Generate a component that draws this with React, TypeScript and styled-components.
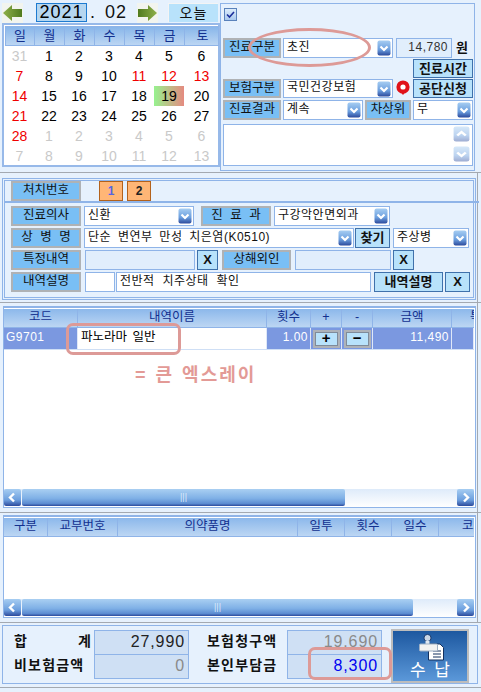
import * as React from 'react'
import styled, { createGlobalStyle } from 'styled-components'

const GlobalStyle = createGlobalStyle`
  html, body {
    margin: 0;
    padding: 0;
    background: #e6f1fd;
  }
  * {
    box-sizing: border-box;
  }
`

const Page = styled.div`
  position: relative;
  width: 481px;
  height: 692px;
  overflow: hidden;
  background: #e6f1fd;
  color: #111;
  font-family: 'Liberation Sans', 'Noto Sans CJK KR', sans-serif;
  font-size: 12px;
  word-spacing: 2px;
`

const Section = styled.section<{ $h: number; $pt?: number; $rule?: boolean }>`
  height: ${p => p.$h}px;
  padding: ${p => p.$pt || 0}px 4px 0 2px;
  border-bottom: 1px solid #a3a9b1;
  background: ${p => (p.$rule ? 'linear-gradient(#a3a9b1, #a3a9b1) 477px 0 / 1px 100% no-repeat' : 'none')};
`

const TopLayout = styled.div`
  display: flex;
  height: 100%;
`

const CalendarColumn = styled.div`
  width: 218px;
  display: flex;
  flex-direction: column;
`

const MonthBar = styled.div`
  height: 23px;
  padding-top: 3px;
  display: flex;
  align-items: flex-start;
`

const ArrowIcon = styled.svg<{ $ml: number }>`
  width: 21px;
  height: 20px;
  margin-left: ${p => p.$ml}px;
  background: #f2f4ee;
  flex: none;
`

const YearBox = styled.div`
  width: 51px;
  height: 19px;
  margin-left: 13px;
  background: #b5d6f0;
  border: 1px solid #1e7bd0;
  font-size: 18px;
  line-height: 17px;
  letter-spacing: 1px;
  text-align: center;
  color: #000;
`

const MonthText = styled.div`
  width: 36px;
  margin-left: 3px;
  font-size: 18px;
  line-height: 19px;
  letter-spacing: 1px;
  word-spacing: 3px;
  white-space: nowrap;
`

const TodayButton = styled.div`
  width: 50px;
  height: 19px;
  margin-left: 10px;
  background: #b8e2fb;
  border-top: 1px solid #f4f4f4;
  border-left: 1px solid #f4f4f4;
  font-size: 14px;
  line-height: 18px;
  text-align: center;
  letter-spacing: 1px;
`

const Calendar = styled.div`
  width: 218px;
  height: 144px;
  background: #fff;
  border: 2px solid #97b9e9;
  padding: 1px 0 0 1px;
`

const WeekHeader = styled.div`
  width: 214px;
  display: grid;
  grid-template-columns: 29px 30px 30px 30px 30px 30px 35px;
  height: 20px;
  border: 1px solid #8fb4e8;
  background: linear-gradient(#88b6ea, #bcd6f3);
`

const WeekDay = styled.div`
  border-right: 1px solid #8fb4e8;
  color: #12308f;
  font-size: 13px;
  line-height: 17px;
  text-align: center;
  &:last-child {
    border-right: 0;
  }
`

const DayGrid = styled.div`
  width: 214px;
  display: grid;
  grid-template-columns: 29px 30px 30px 30px 30px 30px 35px;
  grid-auto-rows: 20px;
`

const Day = styled.div<{ $color: string; $today?: boolean }>`
  color: ${p => p.$color};
  font-size: 14px;
  line-height: 20px;
  text-align: center;
  background: ${p => (p.$today ? 'linear-gradient(90deg, #97f28f, #e58a80)' : 'none')};
`

const FormPanel = styled.div`
  width: 255px;
  height: 168px;
  margin: 3px 0 0 0;
  padding: 3px 1px 0 2px;
  border: 1px solid #8fb4e8;
  display: flex;
  flex-direction: column;
`

const CheckRow = styled.div`
  height: 31px;
  padding: 1px 0 0 1px;
`

const CheckBox = styled.div`
  width: 13px;
  height: 13px;
  background: linear-gradient(#dcecfb, #a9c9ee);
  border: 1px solid #5a82bb;
  display: flex;
  align-items: center;
  justify-content: center;
`

const Row = styled.div<{ $h: number; $mt?: number; $end?: boolean }>`
  display: flex;
  height: ${p => p.$h}px;
  margin-top: ${p => p.$mt || 0}px;
  justify-content: ${p => (p.$end ? 'flex-end' : 'flex-start')};
`

const Label = styled.div<{ $w: number; $ml?: number; $spaced?: boolean }>`
  flex: none;
  width: ${p => p.$w}px;
  margin-left: ${p => p.$ml || 0}px;
  background: #79bff5;
  border: 2px solid #afb2b5;
  line-height: 15px;
  font-size: 12.5px;
  text-align: center;
  word-spacing: ${p => (p.$spaced ? 4 : 2)}px;
  white-space: nowrap;
  overflow: hidden;
`

const SelectBox = styled.div<{ $w: number; $ml?: number }>`
  flex: none;
  width: ${p => p.$w}px;
  margin-left: ${p => p.$ml || 0}px;
  background: #fff;
  border: 1px solid #8fb4e8;
  padding-left: 3px;
  padding-right: 1px;
  display: flex;
  align-items: center;
  justify-content: space-between;
  line-height: 15px;
  white-space: nowrap;
`

const SelectText = styled.span`
  position: relative;
  top: -1px;
  letter-spacing: 0.5px;
  word-spacing: 3px;
`

const ChevronIcon = styled.svg<{ $faded?: boolean }>`
  width: 14px;
  height: 16px;
  flex: none;
  opacity: ${p => (p.$faded ? 0.45 : 1)};
`

const ReadBox = styled.div<{ $w: number; $ml?: number; $fill?: string }>`
  flex: none;
  width: ${p => p.$w}px;
  margin-left: ${p => p.$ml || 0}px;
  background: ${p => p.$fill || '#e1eefc'};
  border: 1px solid #8fb4e8;
  padding: 0 3px;
  line-height: 17px;
  letter-spacing: 0.5px;
  word-spacing: 4px;
  white-space: nowrap;
`

const AmountBox = styled(ReadBox)`
  text-align: right;
  color: #333;
  letter-spacing: 0.5px;
`

const Won = styled.div`
  width: 20px;
  margin-left: 4px;
  font-size: 13px;
  font-weight: 700;
  line-height: 20px;
`

const ActionButton = styled.div<{ $w: number; $ml?: number }>`
  flex: none;
  width: ${p => p.$w}px;
  margin-left: ${p => p.$ml || 0}px;
  background: #b8e2fb;
  border: 1px solid #3f71ab;
  font-size: 13px;
  font-weight: 700;
  line-height: 17px;
  text-align: center;
  white-space: nowrap;
`

const AlertDot = styled.svg`
  width: 16px;
  height: 18px;
  margin-left: 2px;
  flex: none;
`

const MemoBox = styled.div`
  height: 42px;
  width: 250px;
  margin-top: 4px;
  background: #fff;
  border: 1px solid #8fb4e8;
  padding: 1px 2px 0 0;
  display: flex;
  flex-direction: column;
  align-items: flex-end;
  gap: 4px;
`

const MemoScroll = styled(ChevronIcon)`
  width: 17px;
  height: 16px;
`

const DoublePanel = styled.div<{ $h: number }>`
  width: 474px;
  height: ${p => p.$h}px;
  border: 3px double #8fb4e8;
  padding: 0 0 0 6px;
`

const TreatRow = styled.div`
  height: 22px;
  margin: 0 -6px 0 -6px;
  padding: 0 0 0 6px;
  display: flex;
  border-bottom: 2px solid #8fb4e8;
`

const NumberButton = styled.div<{ $ml: number; $active?: boolean }>`
  width: 24px;
  height: 20px;
  margin-left: ${p => p.$ml}px;
  background: #ffb676;
  border: 1px solid #b3621c;
  color: ${p => (p.$active ? '#5566e0' : '#222')};
  font-weight: 700;
  line-height: 18px;
  text-align: center;
`

const FormRows = styled.div`
  padding-top: 3px;
  display: flex;
  flex-direction: column;
  gap: 2px;
`

const GridPanel = styled.div<{ $h: number }>`
  width: 473px;
  height: ${p => p.$h}px;
  margin-left: 1px;
  border: 1px solid #8fb4e8;
  border-top-width: 2px;
  padding: 1px 1px 0 0;
  background: #fff;
  display: flex;
  flex-direction: column;
`

const TableHeader = styled.div`
  display: flex;
  height: 19px;
  overflow: hidden;
  flex: none;
  background: linear-gradient(#8cb8eb, #bcd6f3);
  border-bottom: 1px solid #8fb4e8;
`

const HeaderCell = styled.div<{ $w: number }>`
  flex: none;
  width: ${p => p.$w}px;
  border-right: 1px solid #8fb4e8;
  color: #12308f;
  font-size: 12.5px;
  line-height: 17px;
  text-align: center;
  white-space: nowrap;
`

const TableRow = styled.div`
  display: flex;
  height: 22px;
  flex: none;
  border-bottom: 1px solid #cfdff5;
`

const Cell = styled.div<{ $w: number; $light?: boolean; $right?: boolean }>`
  flex: none;
  width: ${p => p.$w}px;
  padding: 0 2px;
  background: ${p => (p.$light ? '#fff' : '#7b98e0')};
  color: ${p => (p.$light ? '#000' : '#fff')};
  border-right: 1px solid #dfe8f8;
  text-align: ${p => (p.$right ? 'right' : 'left')};
  line-height: 18px;
  letter-spacing: ${p => (p.$light ? 0 : 0.5)}px;
`

const NameCell = styled(Cell)`
  padding-left: 3px;
  font-size: 12.5px;
`

const StepCell = styled(Cell)`
  padding: 2px;
`

const StepButton = styled.div`
  width: 27px;
  height: 18px;
  background: #b8e2fb;
  border: 2px solid #aeb2b8;
  outline: 1px solid #7f8b9a;
  outline-offset: -3px;
  font-size: 15px;
  font-weight: 900;
  line-height: 12px;
  text-align: center;
  color: #000;
`

const TableBody = styled.div`
  flex: 1;
`

const ScrollBar = styled.div`
  height: 18px;
  flex: none;
  display: flex;
  background: linear-gradient(#deebfa, #fff);
  justify-content: space-between;
  padding-right: 0;
`

const ScrollButton = styled.svg`
  width: 17px;
  height: 17px;
  flex: none;
`

const ScrollThumb = styled.div<{ $w: number }>`
  width: ${p => p.$w}px;
  height: 17px;
  margin-left: 1px;
  margin-right: auto;
  border-radius: 2px;
  background: linear-gradient(#a9cff2 0%, #7fb0e6 55%, #5d8dd2 85%, #2c4a9c 100%);
  color: #dbe9fa;
  font-size: 9px;
  line-height: 16px;
  text-align: center;
  letter-spacing: 0;
`

const SummaryPanel = styled.div`
  width: 476px;
  height: 59px;
  border: 1px solid #8fb4e8;
  border-top-width: 1px;
  padding: 4px 0 0 11px;
  display: flex;
`

const SummaryGrid = styled.div<{ $ml?: number }>`
  margin-left: ${p => p.$ml || 0}px;
  display: grid;
  grid-template-columns: 80px 95px;
  grid-auto-rows: 24px;
  height: 47px;
`

const SummaryLabel = styled.div`
  display: flex;
  justify-content: space-between;
  padding-right: 2px;
  font-size: 14px;
  font-weight: 700;
  line-height: 22px;
  letter-spacing: 1.2px;
  white-space: nowrap;
`

const SummaryValue = styled.div<{ $color: string }>`
  background: #cfe0f4;
  border: 1px solid #8fb4e8;
  margin-bottom: -1px;
  padding-right: 3px;
  color: ${p => p.$color};
  font-size: 16px;
  line-height: 21px;
  text-align: right;
  letter-spacing: 0.9px;
`

const PayButton = styled.div`
  width: 78px;
  height: 54px;
  margin: -1px 0 0 9px;
  background: linear-gradient(#1d58a0, #5b98d9);
  border: 2px solid #bdbdbd;
  display: flex;
  flex-direction: column;
  align-items: center;
  color: #fff;
  font-size: 17px;
  word-spacing: 4px;
  line-height: 20px;
`

const StampIcon = styled.svg`
  width: 28px;
  height: 29px;
  margin-top: 1px;
  flex: none;
`

const Ellipse = styled.div`
  position: absolute;
  left: 248px;
  top: 28px;
  width: 123px;
  height: 39px;
  border: 3px solid #dd9a97;
  border-radius: 50%;
`

const MarkBox = styled.div<{ $x: number; $y: number; $w: number; $h: number }>`
  position: absolute;
  left: ${p => p.$x}px;
  top: ${p => p.$y}px;
  width: ${p => p.$w}px;
  height: ${p => p.$h}px;
  border: 3px solid #dd9a97;
  border-radius: 7px;
`

const MarkNote = styled.div`
  position: absolute;
  left: 135px;
  top: 363px;
  color: #e39a96;
  font-size: 18px;
  font-weight: 700;
  line-height: 24px;
  letter-spacing: 2px;
  word-spacing: 1px;
  white-space: nowrap;
`

const LeftArrow = ({ ml }: { ml: number }) => (
  <ArrowIcon $ml={ml} viewBox="0 0 21 20">
    <defs>
      <linearGradient id="arrowL" x1="0" y1="0" x2="1" y2="0">
        <stop offset="0" stopColor="#8fb04a" />
        <stop offset="1" stopColor="#4f7a1e" />
      </linearGradient>
    </defs>
    <path d="M1 10 L10 2 L10 6 L20 6 L20 14 L10 14 L10 18 Z" fill="url(#arrowL)" />
  </ArrowIcon>
)

const RightArrow = ({ ml }: { ml: number }) => (
  <ArrowIcon $ml={ml} viewBox="0 0 21 20">
    <defs>
      <linearGradient id="arrowR" x1="0" y1="0" x2="1" y2="0">
        <stop offset="0" stopColor="#4f7a1e" />
        <stop offset="1" stopColor="#8fb04a" />
      </linearGradient>
    </defs>
    <path d="M20 10 L11 2 L11 6 L1 6 L1 14 L11 14 L11 18 Z" fill="url(#arrowR)" />
  </ArrowIcon>
)

let chevronId = 0

const Chevron = ({ up, faded }: { up?: boolean; faded?: boolean }) => {
  const id = `chev${chevronId++}`
  const Wrap = faded ? MemoScroll : ChevronIcon
  return (
    <Wrap $faded={faded} viewBox="0 0 14 16" preserveAspectRatio="none">
      <defs>
        <linearGradient id={id} x1="0" y1="0" x2="0" y2="1">
          <stop offset="0" stopColor="#a6cdf2" />
          <stop offset="0.6" stopColor="#6b9ede" />
          <stop offset="1" stopColor="#2c4a9c" />
        </linearGradient>
      </defs>
      <rect x="0.5" y="0.5" width="13" height="15" rx="2" fill={`url(#${id})`} />
      <path
        d={up ? 'M3.5 9.5 L7 6 L10.5 9.5' : 'M3.5 6.5 L7 10 L10.5 6.5'}
        fill="none"
        stroke="#fff"
        strokeWidth="2.2"
      />
    </Wrap>
  )
}

const ScrollArrow = ({ right }: { right?: boolean }) => {
  const id = `scr${chevronId++}`
  return (
    <ScrollButton viewBox="0 0 17 17">
      <defs>
        <linearGradient id={id} x1="0" y1="0" x2="0" y2="1">
          <stop offset="0" stopColor="#a6cdf2" />
          <stop offset="0.65" stopColor="#6b9ede" />
          <stop offset="1" stopColor="#2c4a9c" />
        </linearGradient>
      </defs>
      <rect x="0" y="0" width="17" height="17" rx="2" fill={`url(#${id})`} />
      <path
        d={right ? 'M7 4.5 L11 8.5 L7 12.5' : 'M10 4.5 L6 8.5 L10 12.5'}
        fill="none"
        stroke="#fff"
        strokeWidth="2.4"
      />
    </ScrollButton>
  )
}

const Select = ({ w, ml, text }: { w: number; ml?: number; text: string }) => (
  <SelectBox $w={w} $ml={ml}>
    <SelectText>{text}</SelectText>
    <Chevron />
  </SelectBox>
)

const GRAY = '#c9c9c9'
const RED = '#f00000'
const BLACK = '#000'

const weekDays = ['일', '월', '화', '수', '목', '금', '토']

const days: { n: number; c: string; today?: boolean }[] = [
  { n: 31, c: GRAY },
  ...[1, 2, 3, 4, 5, 6].map(n => ({ n, c: BLACK })),
  { n: 7, c: RED },
  { n: 8, c: BLACK },
  { n: 9, c: BLACK },
  { n: 10, c: BLACK },
  { n: 11, c: RED },
  { n: 12, c: RED },
  { n: 13, c: RED },
  { n: 14, c: RED },
  ...[15, 16, 17, 18].map(n => ({ n, c: BLACK })),
  { n: 19, c: BLACK, today: true },
  { n: 20, c: BLACK },
  { n: 21, c: RED },
  ...[22, 23, 24, 25, 26, 27].map(n => ({ n, c: BLACK })),
  { n: 28, c: RED },
  ...[1, 2, 3, 4, 5, 6, 7, 8, 9, 10, 11, 12, 13].map(n => ({ n, c: GRAY }))
]

const drugColumns: [string, number][] = [
  ['구분', 44],
  ['교부번호', 70],
  ['의약품명', 180],
  ['일투', 47],
  ['횟수', 47],
  ['일수', 47],
  ['코드', 70]
]

const App = () => (
  <Page>
    <GlobalStyle />

    <Section $h={173}>
      <TopLayout>
        <CalendarColumn>
          <MonthBar>
            <LeftArrow ml={0} />
            <YearBox>2021</YearBox>
            <MonthText>. 02</MonthText>
            <RightArrow ml={11} />
            <TodayButton>오늘</TodayButton>
          </MonthBar>
          <Calendar>
            <WeekHeader>
              {weekDays.map(d => (
                <WeekDay key={d}>{d}</WeekDay>
              ))}
            </WeekHeader>
            <DayGrid>
              {days.map((d, i) => (
                <Day key={i} $color={d.c} $today={d.today}>
                  {d.n}
                </Day>
              ))}
            </DayGrid>
          </Calendar>
        </CalendarColumn>
        <FormPanel>
          <CheckRow>
            <CheckBox>
              <svg width="9" height="9" viewBox="0 0 9 9">
                <path d="M1 4.5 L3.5 7 L8 2" fill="none" stroke="#1b2f9c" strokeWidth="1.6" />
              </svg>
            </CheckBox>
          </CheckRow>
          <Row $h={20}>
            <Label $w={58}>진료구분</Label>
            <Select w={110} ml={2} text="초진" />
            <AmountBox $w={56} $ml={3}>14,780</AmountBox>
            <Won>원</Won>
          </Row>
          <Row $h={19} $mt={1} $end>
            <ActionButton $w={60}>진료시간</ActionButton>
          </Row>
          <Row $h={19} $mt={1}>
            <Label $w={58}>보험구분</Label>
            <Select w={110} ml={2} text="국민건강보험" />
            <AlertDot viewBox="0 0 16 18">
              <circle cx="8" cy="8" r="4.6" fill="#fff" stroke="#e0121a" strokeWidth="4" />
              <path d="M5.5 13 L10.5 13 L8 16 Z" fill="#e0121a" />
            </AlertDot>
            <ActionButton $w={60} $ml={2}>공단신청</ActionButton>
          </Row>
          <Row $h={20} $mt={2}>
            <Label $w={58}>진료결과</Label>
            <Select w={80} ml={2} text="계속" />
            <Label $w={46} $ml={2}>차상위</Label>
            <Select w={60} ml={2} text="무" />
          </Row>
          <MemoBox>
            <Chevron up faded />
            <Chevron faded />
          </MemoBox>
        </FormPanel>
      </TopLayout>
    </Section>

    <Section $h={130} $pt={5} $rule>
      <DoublePanel $h={122}>
        <TreatRow>
          <Label $w={70} $spaced>처치번호</Label>
          <NumberButton $ml={18} $active>1</NumberButton>
          <NumberButton $ml={4}>2</NumberButton>
        </TreatRow>
        <FormRows>
          <Row $h={20}>
            <Label $w={70}>진료의사</Label>
            <Select w={110} ml={3} text="신환" />
            <Label $w={70} $ml={7} $spaced>진 료 과</Label>
            <Select w={116} ml={3} text="구강악안면외과" />
          </Row>
          <Row $h={20}>
            <Label $w={70} $spaced>상 병 명</Label>
            <Select w={270} ml={3} text="단순 변연부 만성 치은염(K0510)" />
            <ActionButton $w={35} $ml={1}>찾기</ActionButton>
            <Select w={76} ml={3} text="주상병" />
          </Row>
          <Row $h={20}>
            <Label $w={70}>특정내역</Label>
            <ReadBox $w={110} $ml={4} />
            <ActionButton $w={21} $ml={2}>X</ActionButton>
            <Label $w={69} $ml={4}>상해외인</Label>
            <ReadBox $w={96} $ml={4} />
            <ActionButton $w={21} $ml={2}>X</ActionButton>
          </Row>
          <Row $h={20}>
            <Label $w={70}>내역설명</Label>
            <ReadBox $w={30} $ml={4} $fill="#fff" />
            <ReadBox $w={255} $ml={1} $fill="#fff">전반적 치주상태 확인</ReadBox>
            <ActionButton $w={69} $ml={3}>내역설명</ActionButton>
            <ActionButton $w={25} $ml={2}>X</ActionButton>
          </Row>
        </FormRows>
      </DoublePanel>
    </Section>

    <Section $h={210} $pt={3} $rule>
      <GridPanel $h={202}>
        <TableHeader>
          <HeaderCell $w={74}>코드</HeaderCell>
          <HeaderCell $w={189}>내역이름</HeaderCell>
          <HeaderCell $w={44}>횟수</HeaderCell>
          <HeaderCell $w={31}>+</HeaderCell>
          <HeaderCell $w={31}>-</HeaderCell>
          <HeaderCell $w={79}>금액</HeaderCell>
          <HeaderCell $w={60}>특정</HeaderCell>
        </TableHeader>
        <TableRow>
          <Cell $w={74}>G9701</Cell>
          <NameCell $w={189} $light>파노라마 일반</NameCell>
          <Cell $w={44} $right>1.00</Cell>
          <StepCell $w={31}>
            <StepButton>+</StepButton>
          </StepCell>
          <StepCell $w={31}>
            <StepButton>−</StepButton>
          </StepCell>
          <Cell $w={79} $right>11,490</Cell>
          <Cell $w={22} />
        </TableRow>
        <TableBody />
        <ScrollBar>
          <ScrollArrow />
          <ScrollThumb $w={323}>|||</ScrollThumb>
          <ScrollArrow right />
        </ScrollBar>
      </GridPanel>
    </Section>

    <Section $h={110} $pt={2} $rule>
      <GridPanel $h={103}>
        <TableHeader>
          {drugColumns.map(([title, w]) => (
            <HeaderCell key={title} $w={w}>
              {title}
            </HeaderCell>
          ))}
        </TableHeader>
        <TableBody />
        <ScrollBar>
          <ScrollArrow />
          <ScrollThumb $w={391}>|||</ScrollThumb>
          <ScrollArrow right />
        </ScrollBar>
      </GridPanel>
    </Section>

    <Section $h={65} $pt={2}>
      <SummaryPanel>
        <SummaryGrid>
          <SummaryLabel>
            <span>합</span>
            <span>계</span>
          </SummaryLabel>
          <SummaryValue $color="#222">27,990</SummaryValue>
          <SummaryLabel>비보험금액</SummaryLabel>
          <SummaryValue $color="#8a8a8a">0</SummaryValue>
        </SummaryGrid>
        <SummaryGrid $ml={18}>
          <SummaryLabel>보험청구액</SummaryLabel>
          <SummaryValue $color="#8a8a8a">19,690</SummaryValue>
          <SummaryLabel>본인부담금</SummaryLabel>
          <SummaryValue $color="#0000f0">8,300</SummaryValue>
        </SummaryGrid>
        <PayButton>
          <StampIcon viewBox="0 0 28 29">
            <path d="M12.5 12 H24 L27.5 15.5 V28 H12.5 Z" fill="#fff" stroke="#12305f" />
            <path d="M17 19 H25 M17 22 H25 M17 25 H25" stroke="#12305f" strokeWidth="1.1" />
            <circle cx="11.5" cy="6" r="3.6" fill="#c9d6e6" stroke="#16386e" />
            <rect x="9.5" y="9" width="4" height="3" fill="#dfe7f1" />
            <rect x="3.5" y="12" width="18" height="7" rx="1" fill="#f2f2f2" stroke="#9fb0c4" />
          </StampIcon>
          수 납
        </PayButton>
      </SummaryPanel>
    </Section>

    <Ellipse />
    <MarkBox $x={66} $y={323} $w={115} $h={32} />
    <MarkNote>= 큰 엑스레이</MarkNote>
    <MarkBox $x={308} $y={647} $w={84} $h={33} />
  </Page>
)

export default App
